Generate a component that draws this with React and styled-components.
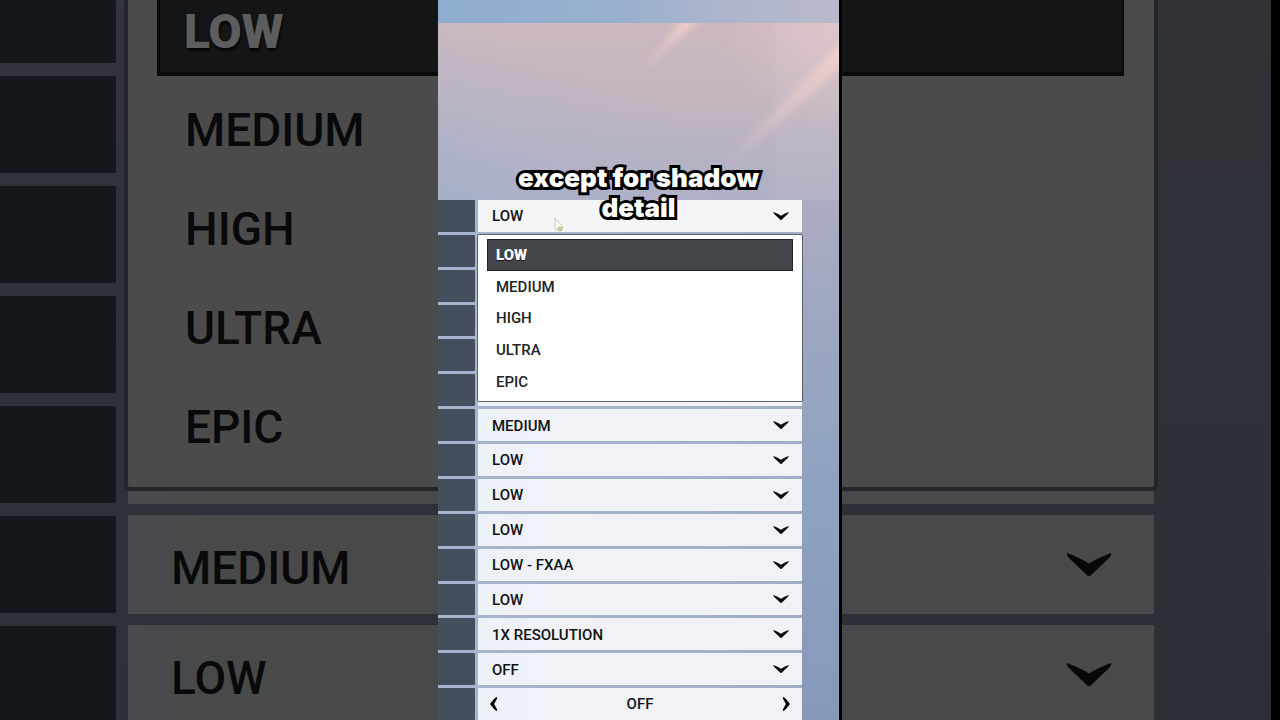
import React from 'react';
import styled, { createGlobalStyle, css } from 'styled-components';

const GlobalStyle = createGlobalStyle`
  * { box-sizing: border-box; }
  body { margin: 0; background: #000; font-family: Roboto, "Liberation Sans", sans-serif; }
  button, select { font: inherit; color: inherit; border: 0; margin: 0; padding: 0; background: none; text-align: left; }
`;

const Page = styled.main`
  display: grid;
  grid-template-columns: 438fr 404fr 438fr;
  height: 100vh;
  min-height: 620px;
  overflow: hidden;
`;

/* Enlarged, dimmed copy of the menu on both sides of the clip */
const Backdrop = styled.section`
  display: flex;
  gap: 8px;
  overflow: hidden;
  color: #08090a;
  font-size: 46px;
  font-weight: 500;
  background: linear-gradient(#33343b, #2e3138 50%, #2c3037);
  ${(p) => p.$side === 'right' && css`
    border-right: 9px solid #000;
    padding-right: 113px;
    background: linear-gradient(#323236, #2e3138 30%, #2c3036);
  `}
`;

const DimLabels = styled.div`
  flex: none;
  width: 116px;
  display: flex;
  flex-direction: column;
  gap: 13px;
`;

const DimLabel = styled.div`
  flex: none;
  height: ${(p) => (p.$cut ? 63 : 97)}px;
  border-radius: 0 2px 2px 0;
  background: #14181c;
`;

const DimColumn = styled.div`
  flex: 1;
  min-width: 0;
  display: flex;
  flex-direction: column;
`;

const DimMenu = styled.div`
  flex: none;
  display: flex;
  flex-direction: column;
  padding-bottom: 11px;
  background: #4b4b4b;
  border-bottom: 4px solid #242529;
  ${(p) => p.$side === 'left'
    ? css`border-left: 4px solid #22252a; border-bottom-left-radius: 6px; padding-left: 29px;`
    : css`border-right: 4px solid #22252a; border-bottom-right-radius: 6px; padding-right: 30px;`}
`;

const DimOption = styled.button`
  height: ${(p) => (p.$selected ? 76 : 99)}px;
  padding-left: 28px;
  ${(p) => p.$selected && css`
    margin-bottom: 4px;
    padding: 0 0 10px 24px;
    color: #5c5d5e;
    font-size: 48px;
    font-weight: 900;
    background: #141516;
    border: solid #08090a;
    border-width: 0 0 4px 3px;
    text-shadow: 1px 3px 2px #060607;
  `}
  ${(p) => p.$selected && p.$side === 'right' && css`border-width: 0 2px 4px 0;`}
`;

const DimRow = styled.button`
  flex: none;
  display: flex;
  align-items: center;
  justify-content: space-between;
  height: ${(p) => (p.$sliver ? 13 : 99)}px;
  margin-bottom: 11px;
  padding-top: ${(p) => (p.$sliver ? 0 : 6)}px;
  background: ${(p) => (p.$side === 'left' ? 'linear-gradient(90deg, #484a4e, #484949 30%)' : '#48494a')};
  ${(p) => p.$side === 'left'
    ? css`margin-left: 4px; padding-left: 43px;`
    : css`margin-right: 4px; padding-right: 42px; padding-top: 0; justify-content: flex-end;`}
`;

const Clip = styled.section`
  position: relative;
  display: flex;
  flex-direction: column;
  min-height: 0;
  border-right: 3px solid #000;
  background: #a9b3ca;
`;

const TopStrip = styled.div`
  height: 23px;
  background: linear-gradient(90deg, #8eadcf, #98b0cf 45%, #b0b6cb 75%, #b9bacb);
`;

const Sky = styled.div`
  position: relative;
  height: 177px;
  overflow: hidden;
  background:
    radial-gradient(ellipse 30% 60% at 100% 0%, rgba(228, 200, 203, .7), rgba(220, 195, 202, 0)),
    linear-gradient(to top right, #a7b0c9, rgba(175, 180, 204, .4) 30%, rgba(175, 180, 204, 0) 55%),
    linear-gradient(#ccb8bf, #c1b5c0 50%, #aeafc3);
  svg { position: absolute; inset: 0; width: 100%; height: 100%; }
`;

const Caption = styled.p`
  position: absolute;
  z-index: 3;
  top: 163px;
  left: 0;
  right: 0;
  margin: 0 auto;
  width: 280px;
  text-align: center;
  color: #fff;
  font: 900 26px/30px Inter, sans-serif;
  -webkit-text-stroke: 6px #000;
  paint-order: stroke fill;
  pointer-events: none;
`;

const Settings = styled.div`
  flex: 1;
  min-height: 0;
  display: grid;
  grid-template-rows: repeat(15, 1fr);
  gap: 3px;
  padding-right: 37px;
  font-size: 15px;
  font-weight: 500;
  color: #111214;
  background: linear-gradient(90deg, #a7b5ce, #a2aec7);
  position: relative;

  &::after {
    content: "";
    position: absolute;
    inset: 0 0 0 auto;
    width: 37px;
    background: linear-gradient(#acacc3, #9aa6c1 30%, #8ea2c1 55%, #8799bb);
  }
`;

const Setting = styled.div`
  position: relative;
  display: grid;
  grid-template-columns: 37px 1fr;
  gap: 3px;
  min-height: 0;
`;

const NameCell = styled.div`
  border-radius: 0 1px 1px 0;
  background: #444e5d;
`;

const Field = styled.div`
  display: flex;
  align-items: center;
  position: relative;
  min-width: 0;
  border-radius: 1px;
  background: ${(p) => (p.$active ? '#f4f5f7' : 'linear-gradient(90deg, #edf2f9, #f0f2f7 30%)')};
`;

const Select = styled.select`
  appearance: none;
  flex: 1;
  align-self: stretch;
  padding: 1px 14px 0;
  outline: 0;
`;

const ChevronBox = styled.span`
  position: absolute;
  right: 13px;
  display: flex;
  pointer-events: none;
`;

const Stepper = styled(Field)`
  justify-content: space-between;
  padding: 0 11px;
  button { display: flex; }
`;

const Menu = styled.ul`
  position: absolute;
  z-index: 2;
  top: 34px;
  left: -1px;
  right: -1px;
  height: 168px;
  margin: 0;
  padding: 4px 9px;
  list-style: none;
  display: grid;
  grid-template-rows: repeat(5, 1fr);
  background: #fff;
  border: 1px solid #5c636c;
  border-radius: 2px;
`;

const Option = styled.button`
  width: 100%;
  height: 100%;
  padding: 1px 0 0 9px;
  color: #222326;
  ${(p) => p.$selected && css`
    padding-left: 8px;
    color: #fff;
    font-weight: 900;
    background: #42464b;
    border: 1px solid #202225;
    text-shadow: 0 1px 1px #17181a;
  `}
`;

const Pointer = styled.svg`
  position: absolute;
  z-index: 3;
  left: 76px;
  top: 17px;
`;

const Down = ({ size = 16 }) => (
  <svg width={size} height={size / 2} viewBox="0 0 44 22" aria-hidden="true">
    <path d="M1 0 Q14 5 22 10 Q30 5 43 0 Q44 2 40 6 L22 23 L4 6 Q0 2 1 0Z" fill="#07080a" />
  </svg>
);

const Side = ({ flip }) => (
  <svg width="10" height="16" viewBox="0 0 10 16" aria-hidden="true">
    <path
      d={flip ? 'M2 1 Q4 1 9 8 Q4 15 2 15 Q1 14 5 8 Q1 2 2 1Z' : 'M8 1 Q6 1 1 8 Q6 15 8 15 Q9 14 5 8 Q9 2 8 1Z'}
      fill="#07080a"
    />
  </svg>
);

const LEVELS = ['LOW', 'MEDIUM', 'HIGH', 'ULTRA', 'EPIC'];
const VALUES = ['LOW', 'LOW', 'LOW', 'LOW', 'LOW', 'LOW', 'MEDIUM', 'LOW', 'LOW', 'LOW', 'LOW - FXAA', 'LOW', '1X RESOLUTION', 'OFF'];

function BackdropLeft() {
  return (
    <Backdrop $side="left">
      <DimLabels>
        {[0, 1, 2, 3, 4, 5, 6].map((i) => <DimLabel key={i} $cut={i === 0} />)}
      </DimLabels>
      <DimColumn>
        <DimMenu $side="left">
          {LEVELS.map((level, i) => (
            <DimOption key={level} $side="left" $selected={i === 0} tabIndex={-1}>{level}</DimOption>
          ))}
        </DimMenu>
        <DimRow $side="left" $sliver tabIndex={-1} />
        <DimRow $side="left" tabIndex={-1}>MEDIUM</DimRow>
        <DimRow $side="left" tabIndex={-1}>LOW</DimRow>
      </DimColumn>
    </Backdrop>
  );
}

function BackdropRight() {
  return (
    <Backdrop $side="right">
      <DimColumn>
        <DimMenu $side="right">
          {LEVELS.map((level, i) => (
            <DimOption key={level} $side="right" $selected={i === 0} tabIndex={-1} />
          ))}
        </DimMenu>
        <DimRow $side="right" $sliver tabIndex={-1} />
        <DimRow $side="right" tabIndex={-1}><Down size={46} /></DimRow>
        <DimRow $side="right" tabIndex={-1}><Down size={46} /></DimRow>
      </DimColumn>
    </Backdrop>
  );
}

export default function App() {
  return (
    <>
      <GlobalStyle />
      <Page>
        <BackdropLeft />
        <Clip>
          <TopStrip />
          <Sky>
            <svg viewBox="0 0 401 177" preserveAspectRatio="none" aria-hidden="true">
              <defs>
                <filter id="soft" x="-20%" y="-20%" width="140%" height="140%"><feGaussianBlur stdDeviation="3" /></filter>
                <linearGradient id="ray" x1="1" y1="0" x2="0" y2="1">
                  <stop offset="0" stopColor="#f6d2cc" stopOpacity=".95" />
                  <stop offset="1" stopColor="#e0c2ca" stopOpacity="0" />
                </linearGradient>
              </defs>
              <path d="M337 0H401V177H337Z" fill="#fff" opacity=".05" />
              <path d="M412 10 L412 36 L300 137 L276 150 Z" fill="url(#ray)" filter="url(#soft)" />
              <path d="M243 -3 L261 -3 L205 50 L190 64 Z" fill="url(#ray)" filter="url(#soft)" />
            </svg>
          </Sky>
          <Settings>
            {VALUES.map((value, i) => (
              <Setting key={i}>
                <NameCell />
                <Field $active={i === 0}>
                  <Select aria-label={`Setting ${i + 1}`} defaultValue={value}>
                    <option>{value}</option>
                  </Select>
                  <ChevronBox><Down /></ChevronBox>
                  {i === 0 && (
                    <>
                      <Pointer width="12" height="16" viewBox="0 0 12 16" aria-hidden="true">
                        <path d="M1 1 L9 10 L6 11 L3 13 L1 12Z" fill="#fbfaf8" stroke="#c9c5bd" />
                        <circle cx="6" cy="12" r="2" fill="#d9d79a" stroke="#b9b77e" />
                      </Pointer>
                      <Menu role="listbox" aria-label="Levels">
                        {LEVELS.map((level, n) => (
                          <li key={level} role="presentation">
                            <Option role="option" aria-selected={n === 0} $selected={n === 0}>{level}</Option>
                          </li>
                        ))}
                      </Menu>
                    </>
                  )}
                </Field>
              </Setting>
            ))}
            <Setting>
              <NameCell />
              <Stepper>
                <button aria-label="Previous"><Side /></button>
                <output>OFF</output>
                <button aria-label="Next"><Side flip /></button>
              </Stepper>
            </Setting>
          </Settings>
          <Caption>except for shadow detail</Caption>
        </Clip>
        <BackdropRight />
      </Page>
    </>
  );
}
